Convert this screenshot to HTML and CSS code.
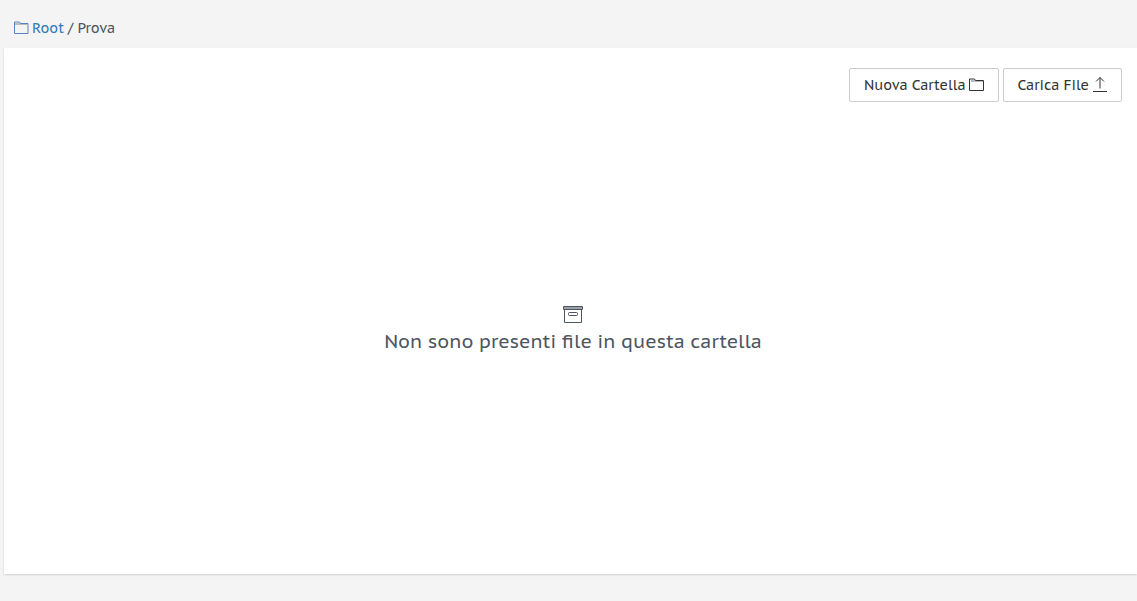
FILE: index.html
```html
<!DOCTYPE html>
<html lang="it">
<head>
  <meta charset="UTF-8" />
  <meta name="viewport" content="width=device-width, initial-scale=1.0"/>
  <title>Prova</title>
  <link rel="stylesheet" href="styles.css">
</head>
<body>
  <nav class="breadcrumb">
    <a href="#">
      <svg class="icon" viewBox="0 0 16 16"><path class="fold" d="M2 4h12"/><path d="M1.500 13.500v-11.500h5l1 1.500h7.500v10z"/></svg>
      Root</a>
    <span>/ Prova</span>
  </nav>

  <main class="panel">
    <div class="toolbar">
      <button type="button" class="btn">
        Nuova Cartella
        <svg class="icon" viewBox="0 0 16 16"><path class="fold" d="M2 4h12"/><path d="M.5 13.500v-11.500h5l1 1.500h8v10z"/></svg>
      </button>
      <button type="button" class="btn">
        Carica File
        <svg class="icon" viewBox="0 0 16 16"><path d="M1 14.500h14M8 11.500v-11M4 4.500l4-4 4 4"/></svg>
      </button>
    </div>
    <div class="empty">
      <svg class="empty-icon" viewBox="0 0 20 18"><path class="lid" d="M1 1h18v3H1z"/><path d="M.5.5h19v3H.5zM1.500 3.500v13h17v-13"/><rect x="5.500" y="6.500" width="9" height="3" rx="1"/></svg>
      <p>Non sono presenti file in questa cartella</p>
    </div>
  </main>
</body>
</html>
```
FILE: styles.css
```css
* {
  box-sizing: border-box;
}
body {
  font-family: 'PT Sans Caption', 'Noto Sans', sans-serif;
  font-size: 14px;
  line-height: 20px;
  background-color: #f4f4f4;
  color: #4c5560;
  margin: 0;
  min-height: 100vh;
  display: flex;
  flex-direction: column;
}
.breadcrumb {
  display: flex;
  gap: 4px;
  padding: 18px 13px 10px;
}
.breadcrumb a {
  display: flex;
  align-items: center;
  gap: 3px;
  color: #337ab7;
  text-decoration: none;
}
.breadcrumb .icon {
  color: #5a82c0;
}
.icon {
  width: 16px;
  height: 16px;
}
svg {
  fill: none;
  stroke: currentColor;
}
.fold {
  stroke: #b8bcc6;
  stroke-width: 2;
}
.panel {
  flex: 1;
  display: flex;
  flex-direction: column;
  margin: 0 0 27px 4px;
  padding: 20px 15px 15px 20px;
  background-color: #fff;
  box-shadow: 0 1px 2px rgba(0, 0, 0, 0.15);
}
.toolbar {
  display: flex;
  justify-content: flex-end;
  gap: 4px;
}
.btn {
  display: flex;
  align-items: center;
  gap: 3px;
  padding: 6px 13px 6px 14px;
  font: inherit;
  color: #333;
  background-color: #fff;
  border: 1px solid #ccc;
  border-radius: 2px;
  cursor: pointer;
}
.btn:hover {
  background-color: #f0f0f0;
}
.empty {
  flex: 1;
  display: flex;
  flex-direction: column;
  align-items: center;
  justify-content: center;
  gap: 3px;
  font-size: 19px;
  line-height: 28px;
}
.empty-icon {
  width: 20px;
  height: 18px;
}
.lid {
  fill: #9aa3a8;
  stroke: none;
}
.empty p {
  margin: 0;
}
```
